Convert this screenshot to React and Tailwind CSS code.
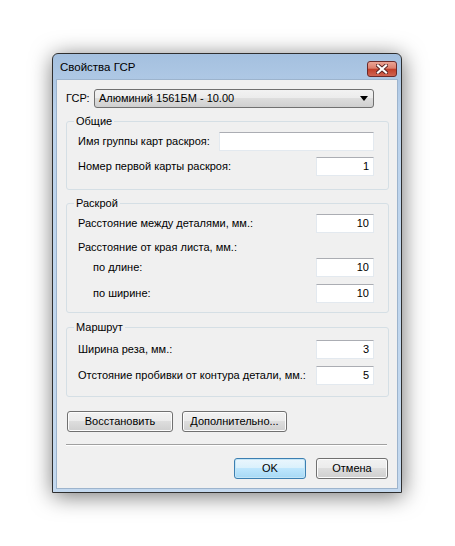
import React from 'react';

const font = { fontFamily: '"Liberation Sans", Arial, sans-serif' };

function Field({ value = '', className = 'w-[58px]' }) {
  return (
    <div
      className={`h-[19px] bg-white border border-[#e3e9ef] border-t-[#abadb3] flex items-center justify-end pr-[4px] text-[11px] text-black ${className}`}
    >
      {value}
    </div>
  );
}

function Row({ label, value, indent = false, wide = false }) {
  return (
    <div className="flex items-center justify-between h-[19px]">
      <span className={indent ? 'pl-[15px]' : ''}>{label}</span>
      <Field value={value} className={wide ? 'w-[155px]' : 'w-[58px]'} />
    </div>
  );
}

function Group({ title, className = '', children }) {
  return (
    <div className={`relative border border-[#d5dfe5] rounded-[3px] pl-[11px] pr-[14px] ${className}`}>
      <span className="absolute -top-[7px] left-[7px] px-[2px] bg-[#f0f0f0] leading-[13px]">{title}</span>
      {children}
    </div>
  );
}

function Button({ children, primary = false, className = '' }) {
  return (
    <div
      className={`h-[21px] rounded-[3px] border flex items-center justify-center text-[11px] text-black ${
        primary
          ? 'border-[#3c7fb1] bg-[linear-gradient(#eaf6fd_0%,#d9f0fc_50%,#bee6fd_50%,#a7d9f5_100%)] shadow-[inset_0_0_0_1px_#c4e5f6]'
          : 'border-[#707070] bg-[linear-gradient(#f2f2f2_0%,#ebebeb_50%,#dddddd_50%,#cfcfcf_100%)] shadow-[inset_0_0_0_1px_#fcfcfc]'
      } ${className}`}
    >
      {children}
    </div>
  );
}

export default function App() {
  return (
    <div className="min-h-screen bg-white pl-[52px] pt-[53px]" style={font}>
      <div className="w-[350px] h-[440px] flex flex-col rounded-t-[6px] border border-[#2f2f2f] bg-[linear-gradient(#a4c0df,#bcd3ec_60px,#c4d9ef)] shadow-[1px_3px_22px_rgba(0,0,0,0.55)]">
        {/* заголовок */}
        <div className="h-[25px] flex items-center justify-between pl-[7px] pr-[4px]">
          <span className="text-[11.5px] text-black pt-[2px]">Свойства ГСР</span>
          <div className="w-[30px] h-[16px] mt-[4px] rounded-[3px] border border-[#6b2a2a] bg-[linear-gradient(#eba495_0%,#dc7f6d_45%,#c13d28_50%,#cf6452_100%)] flex items-center justify-center">
            <svg width="12" height="10" viewBox="0 0 12 10">
              <path d="M2 1.5 L10 8.5 M10 1.5 L2 8.5" stroke="#5a2323" strokeWidth="4" strokeLinecap="square" />
              <path d="M2 1.5 L10 8.5 M10 1.5 L2 8.5" stroke="#ffffff" strokeWidth="2.2" strokeLinecap="square" />
            </svg>
          </div>
        </div>

        {/* клиентская область */}
        <div className="flex-1 mx-[3px] mb-[3px] border border-[#9db4cd] bg-[#f0f0f0] pl-[9px] pr-[8px] pt-[9px] text-[11px] text-black flex flex-col">
          <div className="flex items-center h-[19px]">
            <span className="w-[28px]">ГСР:</span>
            <div className="w-[280px] h-[19px] rounded-[3px] border border-[#707070] bg-[linear-gradient(#f2f2f2_0%,#ebebeb_50%,#dddddd_50%,#cfcfcf_100%)] flex items-center justify-between pl-[4px] pr-[5px]">
              <span>Алюминий 1561БМ - 10.00</span>
              <svg width="8" height="5" viewBox="0 0 8 5">
                <path d="M0 0 H8 L4 5 Z" fill="#000" />
              </svg>
            </div>
          </div>

          <Group title="Общие" className="mt-[13px] pt-[10px] pb-[13px]">
            <div className="flex flex-col gap-[6px]">
              <Row label="Имя группы карт раскроя:" wide />
              <Row label="Номер первой карты раскроя:" value="1" />
            </div>
          </Group>

          <Group title="Раскрой" className="mt-[13px] pt-[10px] pb-[9px]">
            <Row label="Расстояние между деталями, мм.:" value="10" />
            <div className="h-[19px] mt-[5px] flex items-center">Расстояние от края листа, мм.:</div>
            <div className="mt-[1px]">
              <Row label="по длине:" value="10" indent />
            </div>
            <div className="mt-[7px]">
              <Row label="по ширине:" value="10" indent />
            </div>
          </Group>

          <Group title="Маршрут" className="mt-[14px] pt-[12px] pb-[11px]">
            <div className="flex flex-col gap-[7px]">
              <Row label="Ширина реза, мм.:" value="3" />
              <Row label="Отстояние пробивки от контура детали, мм.:" value="5" />
            </div>
          </Group>

          <div className="flex gap-[9px] mt-[14px] pl-[1px]">
            <Button className="w-[106px]">Восстановить</Button>
            <Button className="w-[105px]">Дополнительно...</Button>
          </div>

          <div className="mt-[12px] mr-[2px] border-t border-[#a0a0a0] border-b border-b-white" />

          <div className="flex justify-end gap-[10px] mt-[12px] pr-[1px]">
            <Button primary className="w-[72px]">OK</Button>
            <Button className="w-[72px]">Отмена</Button>
          </div>
        </div>
      </div>
    </div>
  );
}
